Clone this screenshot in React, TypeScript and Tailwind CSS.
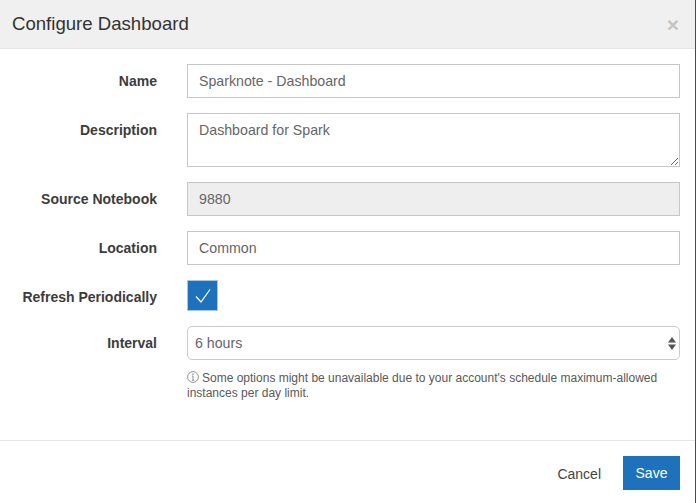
import React from "react";

function Row({ label, children }: { label: string; children: React.ReactNode }) {
  return (
    <div className="flex">
      <label className="w-[157px] shrink-0 pt-[7px] text-right text-[14px] leading-[20px] font-bold text-[#3c3c3c]">{label}</label>
      <div className="ml-[30px] w-[493px]">{children}</div>
    </div>
  );
}

const field = "block h-[34px] w-full border border-[#c6c6c6] px-[11px] text-[14.2px] text-[#666] leading-[20px] outline-none";

export default function App() {
  return (
    <div className="h-[503px] w-[696px] overflow-hidden border-r border-[#4a4a4a] bg-white font-['Liberation_Sans',Arial,sans-serif]">
      <header className="flex h-[49px] items-center justify-between border-b border-[#e5e5e5] bg-[#f0f0f0] pr-[16px] pl-[12px]">
        <h4 className="text-[18.6px] leading-[20px] font-normal text-[#333]">Configure Dashboard</h4>
        <span className="text-[21px] leading-[21px] font-bold text-[#c4c4c4]">×</span>
      </header>
      <div className="flex h-[391px] flex-col gap-[15px] pt-[15px]">
        <Row label="Name">
          <input className={`${field} bg-white`} defaultValue="Sparknote - Dashboard" />
        </Row>
        <Row label="Description">
          <textarea className="block h-[54px] w-full resize-y border border-[#c6c6c6] bg-white px-[11px] py-[6px] text-[14.2px] leading-[20px] text-[#666] outline-none" defaultValue="Dashboard for Spark" />
        </Row>
        <Row label="Source Notebook">
          <input className={`${field} bg-[#eeeeee]`} defaultValue="9880" readOnly />
        </Row>
        <Row label="Location">
          <input className={`${field} bg-white`} defaultValue="Common" />
        </Row>
        <Row label="Refresh Periodically">
          <div className="flex h-[31px] w-[31px] items-center justify-center border border-[#a9c6e0] bg-[#1e72bb]">
            <svg width="18" height="16" viewBox="0 0 18 16" fill="none" stroke="#fff" strokeWidth="1.2">
              <path d="M2 8.5 L7 14 L16 1.5" />
            </svg>
          </div>
        </Row>
        <Row label="Interval">
          <div className="relative flex h-[34px] items-center rounded-[5px] border border-[#ccc] bg-white pt-px pl-[7px] text-[14.2px] text-[#666]">
            <span>6 hours</span>
            <svg className="absolute top-[10px] right-[3px]" width="8" height="13" viewBox="0 0 8 13" fill="#555">
              <path d="M4 0 L8 5.5 H0 Z M0 7.5 H8 L4 13 Z" />
            </svg>
          </div>
          <p className="mt-[11px] text-[12px] leading-[15px] text-[#595959]">
            <svg className="mr-[3px] inline-block align-[-1px]" width="12" height="12" viewBox="0 0 12 12" fill="none" stroke="#888" strokeWidth="0.9">
              <circle cx="6" cy="6" r="5.4" />
              <path d="M6 5 V9.2 M4.8 9.2 H7.2 M4.9 5 H6" />
              <circle cx="6" cy="3.1" r="0.4" />
            </svg>
            Some options might be unavailable due to your account's schedule maximum-allowed instances per day limit.
          </p>
        </Row>
      </div>
      <footer className="flex h-[63px] items-start justify-end gap-[22px] border-t border-[#e5e5e5] pt-[15px] pr-[15px]">
        <button className="mt-[8px] text-[14px] leading-[20px] text-[#444]">Cancel</button>
        <button className="h-[34px] w-[57px] bg-[#1e72bb] text-[14px] text-white">Save</button>
      </footer>
    </div>
  );
}
